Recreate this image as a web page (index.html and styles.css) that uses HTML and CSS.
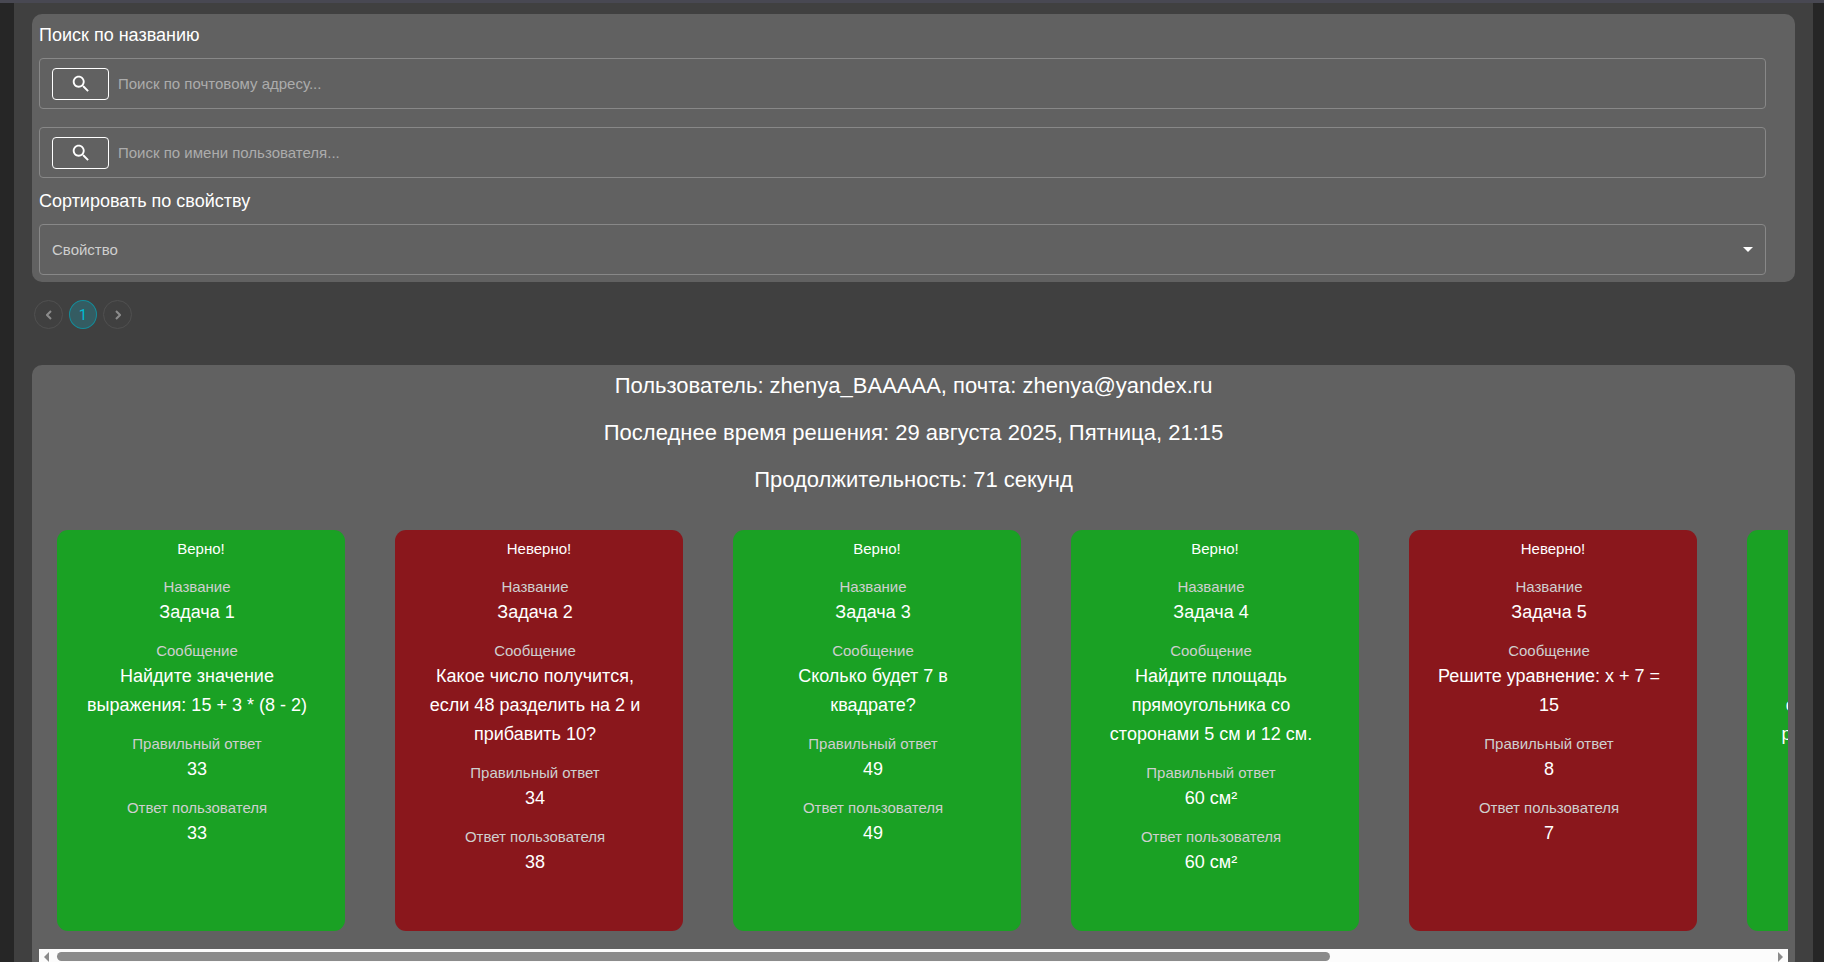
FILE: index.html
```html
<!DOCTYPE html>
<html lang="ru">
<head>
<meta charset="utf-8">
<title>Решения пользователей</title>
<link rel="stylesheet" href="styles.css">
</head>
<body>
<main class="page">
  <form class="panel filters">
    <h2 class="filters-title">Поиск по названию</h2>
    <div class="fields">
      <div class="field">
        <button class="search-button" type="button" aria-label="Найти по почте"><svg class="search-icon" viewBox="0 0 24 24"><path d="M15.5 14h-.79l-.28-.27C15.41 12.59 16 11.11 16 9.5 16 5.91 13.09 3 9.5 3S3 5.91 3 9.5 5.91 16 9.5 16c1.61 0 3.09-.59 4.23-1.57l.27.28v.79l5 4.99L20.49 19l-4.99-5zm-6 0C7.01 14 5 11.99 5 9.5S7.01 5 9.5 5 14 7.01 14 9.5 11.99 14 9.5 14z"/></svg></button>
        <input class="search-input" type="text" aria-label="Почтовый адрес" placeholder="Поиск по почтовому адресу...">
      </div>
      <div class="field">
        <button class="search-button" type="button" aria-label="Найти по имени"><svg class="search-icon" viewBox="0 0 24 24"><path d="M15.5 14h-.79l-.28-.27C15.41 12.59 16 11.11 16 9.5 16 5.91 13.09 3 9.5 3S3 5.91 3 9.5 5.91 16 9.5 16c1.61 0 3.09-.59 4.23-1.57l.27.28v.79l5 4.99L20.49 19l-4.99-5zm-6 0C7.01 14 5 11.99 5 9.5S7.01 5 9.5 5 14 7.01 14 9.5 11.99 14 9.5 14z"/></svg></button>
        <input class="search-input" type="text" aria-label="Имя пользователя" placeholder="Поиск по имени пользователя...">
      </div>
    </div>
    <h2 class="filters-title sort-title" id="sort-title">Сортировать по свойству</h2>
    <div class="field">
      <select class="sort-select" aria-labelledby="sort-title"><option>Свойство</option></select>
      <svg class="select-arrow" viewBox="0 0 10 5"><path d="M0 0h10L5 5z"/></svg>
    </div>
  </form>

  <nav class="pagination" aria-label="Страницы">
    <button class="page-button" type="button" aria-label="Назад" disabled><svg class="chevron" viewBox="0 0 6 10"><path d="M5 1L1 5l4 4"/></svg></button>
    <button class="page-button current" type="button">1</button>
    <button class="page-button" type="button" aria-label="Вперёд" disabled><svg class="chevron" viewBox="0 0 6 10"><path d="M1 1l4 4-4 4"/></svg></button>
  </nav>

  <section class="panel solution">
    <p class="solution-line">Пользователь: zhenya_BAAAAA, почта: zhenya@yandex.ru</p>
    <p class="solution-line">Последнее время решения: 29 августа 2025, Пятница, 21:15</p>
    <p class="solution-line">Продолжительность: 71 секунд</p>
    <div class="cards">
      <article class="card right">
        <p class="verdict">Верно!</p>
        <dl class="facts">
          <dt>Название</dt><dd>Задача 1</dd>
          <dt>Сообщение</dt><dd>Найдите значение выражения: 15 + 3 * (8 - 2)</dd>
          <dt>Правильный ответ</dt><dd>33</dd>
          <dt>Ответ пользователя</dt><dd>33</dd>
        </dl>
      </article>
      <article class="card wrong">
        <p class="verdict">Неверно!</p>
        <dl class="facts">
          <dt>Название</dt><dd>Задача 2</dd>
          <dt>Сообщение</dt><dd>Какое число получится, если 48 разделить на 2 и прибавить 10?</dd>
          <dt>Правильный ответ</dt><dd>34</dd>
          <dt>Ответ пользователя</dt><dd>38</dd>
        </dl>
      </article>
      <article class="card right">
        <p class="verdict">Верно!</p>
        <dl class="facts">
          <dt>Название</dt><dd>Задача 3</dd>
          <dt>Сообщение</dt><dd>Сколько будет 7 в квадрате?</dd>
          <dt>Правильный ответ</dt><dd>49</dd>
          <dt>Ответ пользователя</dt><dd>49</dd>
        </dl>
      </article>
      <article class="card right">
        <p class="verdict">Верно!</p>
        <dl class="facts">
          <dt>Название</dt><dd>Задача 4</dd>
          <dt>Сообщение</dt><dd>Найдите площадь прямоугольника со сторонами 5 см и 12 см.</dd>
          <dt>Правильный ответ</dt><dd>60 см²</dd>
          <dt>Ответ пользователя</dt><dd>60 см²</dd>
        </dl>
      </article>
      <article class="card wrong">
        <p class="verdict">Неверно!</p>
        <dl class="facts">
          <dt>Название</dt><dd>Задача 5</dd>
          <dt>Сообщение</dt><dd>Решите уравнение: x + 7 = 15</dd>
          <dt>Правильный ответ</dt><dd>8</dd>
          <dt>Ответ пользователя</dt><dd>7</dd>
        </dl>
      </article>
      <article class="card right">
        <p class="verdict">Верно!</p>
        <dl class="facts">
          <dt>Название</dt><dd>Задача 6</dd>
          <dt>Сообщение</dt><dd>Площадь участка со<br>сторонами 6 см и 12 см,<br>разделить её на 3 и на 2.</dd>
          <dt>Правильный ответ</dt><dd>12</dd>
          <dt>Ответ пользователя</dt><dd>12</dd>
        </dl>
      </article>
    </div>
    <div class="scrollbar">
      <svg class="scroll-arrow" viewBox="0 0 5 10"><path d="M5 0v10L0 5z"/></svg>
      <div class="scroll-track"><div class="scroll-thumb" style="width: 74.3%"></div></div>
      <svg class="scroll-arrow" viewBox="0 0 5 10"><path d="M0 0v10l5-5z"/></svg>
    </div>
  </section>
</main>
</body>
</html>
```
FILE: styles.css
```css
* {
  box-sizing: border-box;
}

html {
  height: 100%;
  overflow: hidden;
}

body {
  margin: 0;
  min-height: 100%;
  padding: 0 11px 0 14px;
  border-top: 3px solid #484852;
  background: #262626;
  color: #fff;
  font-family: "Liberation Sans", Arial, sans-serif;
}

button,
input,
select {
  font-family: inherit;
}

.page {
  padding: 11px 18px 18px;
  background: #404040;
}

.panel {
  padding: 7px;
  border-radius: 10px;
  background: #616161;
}

.filters {
  padding-right: 29px;
}

.filters-title {
  margin: 0 0 9px;
  font-size: 18px;
  font-weight: 400;
  line-height: 28px;
}

.sort-title {
  margin-top: 9px;
}

.fields {
  display: flex;
  flex-direction: column;
  gap: 18px;
}

.field {
  display: flex;
  align-items: center;
  gap: 9px;
  height: 51px;
  padding: 0 12px;
  border: 1px solid #888;
  border-radius: 4px;
}

.search-button {
  display: flex;
  align-items: center;
  justify-content: center;
  width: 57px;
  height: 32px;
  padding: 0;
  border: 1px solid #fff;
  border-radius: 4px;
  background: none;
}

.search-icon {
  width: 22px;
  height: 22px;
  fill: #fff;
}

.search-input,
.sort-select {
  flex: 1;
  min-width: 0;
  padding: 0;
  border: 0;
  outline: 0;
  background: none;
  color: #fff;
  font-size: 15px;
}

.search-input::placeholder {
  color: #acacac;
  opacity: 1;
}

.sort-select {
  appearance: none;
  color: #cfcfcf;
}

.select-arrow {
  width: 10px;
  height: 5px;
  fill: #fff;
}

.pagination {
  display: flex;
  gap: 6px;
  padding: 18px 2px 36px;
}

.page-button {
  display: flex;
  align-items: center;
  justify-content: center;
  width: 29px;
  height: 29px;
  padding: 0;
  border: 1px solid #505050;
  border-radius: 50%;
  background: none;
}

.page-button.current {
  width: 28px;
  border-color: #148c9a;
  background: #345c62;
  color: #00bcd4;
  font-family: Roboto, sans-serif;
  font-size: 15px;
}

.chevron {
  width: 6px;
  height: 10px;
  fill: none;
  stroke: #8c8c8c;
  stroke-width: 2;
}

.solution {
  padding-top: 3px;
}

.solution-line {
  margin: 0 0 11px;
  font-size: 22px;
  line-height: 36px;
  text-align: center;
}

.cards {
  display: flex;
  gap: 50px;
  overflow-x: auto;
  scrollbar-width: none;
  padding: 21px 18px 18px;
}

.card {
  flex: 0 0 288px;
  min-height: 401px;
  padding: 7px;
  border-radius: 11px;
  text-align: center;
}

.right {
  background: #1aa124;
}

.wrong {
  background: #8a171c;
}

.verdict {
  margin: 0 0 15px;
  font-size: 15px;
  line-height: 23px;
}

.facts {
  margin: 0 21px 0 13px;
}

.facts dt {
  color: #cfcfcf;
  font-size: 15px;
  line-height: 23px;
}

.facts dd {
  margin: 0 0 12px;
  font-size: 18px;
  line-height: 29px;
}

.scrollbar {
  display: flex;
  align-items: center;
  gap: 8px;
  height: 15px;
  padding: 0 5px;
  background: #fcfcfc;
}

.scroll-arrow {
  width: 5px;
  height: 10px;
  fill: #8b8b8b;
}

.scroll-track {
  flex: 1;
}

.scroll-thumb {
  height: 9px;
  border-radius: 5px;
  background: #8b8b8b;
}
```
